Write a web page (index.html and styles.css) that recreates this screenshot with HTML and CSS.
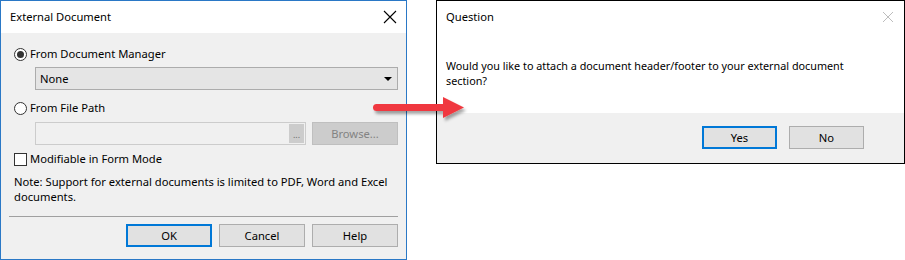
FILE: index.html
```html
<!DOCTYPE html>
<html>
  <head>
    <title>External Document</title>
    <link rel="stylesheet" href="styles.css">
  </head>

  <body>
    <div class="stage">
      <div class="dialog ext">
        <div class="titlebar">
          <span class="title">External Document</span>
          <svg class="close" width="14" height="14" viewBox="0 0 14 14">
            <path d="M1 1 L13 13 M13 1 L1 13" stroke="#000" stroke-width="1.1" fill="none" />
          </svg>
        </div>

        <div class="body">
          <label class="option first">
            <span class="radio checked"></span>
            From Document Manager
          </label>
          <div class="combo">
            <span>None</span>
            <span class="caret"></span>
          </div>

          <label class="option second">
            <span class="radio"></span>
            From File Path
          </label>
          <div class="pathrow">
            <div class="pathbox">
              <span class="dots">...</span>
            </div>
            <button class="btn disabled" disabled>Browse...</button>
          </div>

          <label class="option third">
            <span class="check"></span>
            Modifiable in Form Mode
          </label>

          <p class="note">
            Note: Support for external documents is limited to PDF, Word and Excel
            documents.
          </p>

          <hr class="sep" />

          <div class="actions">
            <button class="btn default">OK</button>
            <button class="btn">Cancel</button>
            <button class="btn">Help</button>
          </div>
        </div>
      </div>

      <div class="dialog question">
        <div class="qtop">
          <div class="qtitle">
            <span class="title">Question</span>
            <svg class="close faint" width="12" height="12" viewBox="0 0 12 12">
              <path d="M1 1 L11 11 M11 1 L1 11" stroke="#bdbdbd" stroke-width="1" fill="none" />
            </svg>
          </div>
          <p class="message">
            Would you like to attach a document header/footer to your external document
            section?
          </p>
        </div>
        <div class="qfoot">
          <button class="btn default small">Yes</button>
          <button class="btn small">No</button>
        </div>
      </div>

      <!-- red arrow drawn over both dialogs -->
      <svg class="arrow" width="100" height="34" viewBox="0 0 100 34">
        <defs>
          <filter id="shadow" x="-10%" y="-30%" width="130%" height="180%">
            <feDropShadow dx="2" dy="3" stdDeviation="1.6" flood-color="#000" flood-opacity="0.35" />
          </filter>
        </defs>
        <g filter="url(#shadow)">
          <rect x="3" y="10" width="74" height="7" rx="3.5" fill="#f0393f" />
          <path d="M73 3 L94 13.5 L73 24 Z" fill="#f0393f" />
        </g>
      </svg>
    </div>
  </body>
</html>
```

FILE: styles.css
```css
body {
  margin: 0;
  background-color: #fff;
  font-family: "Noto Sans", "Open Sans", sans-serif;
  font-size: 11.2px;
  color: #000;
}

.stage {
  position: relative;
  display: flex;
  align-items: flex-start;
  width: 905px;
  height: 260px;
}

.dialog {
  box-sizing: border-box;
  display: flex;
  flex-direction: column;
}

.ext {
  width: 407px;
  height: 260px;
  border: 1px solid #2a78c6;
  background-color: #f0f0f0;
}

.titlebar {
  height: 32px;
  background-color: #fff;
  display: flex;
  align-items: center;
  justify-content: space-between;
  padding: 0 9px 0 9px;
}

.title {
  line-height: 16px;
}

.close {
  display: block;
}

.body {
  flex: 1;
  display: flex;
  flex-direction: column;
  padding: 0 8px 0 13px;
}

.option {
  display: flex;
  align-items: center;
  gap: 3px;
  height: 16px;
  line-height: 16px;
}

.option.first {
  margin-top: 13px;
}

.option.second {
  margin-top: 10px;
}

.option.third {
  margin-top: 6px;
}

.radio {
  box-sizing: border-box;
  width: 13px;
  height: 13px;
  border: 1px solid #333;
  border-radius: 50%;
  background-color: #fff;
  display: flex;
  align-items: center;
  justify-content: center;
}

.radio.checked::after {
  content: "";
  width: 7px;
  height: 7px;
  border-radius: 50%;
  background-color: #333;
}

.check {
  box-sizing: border-box;
  width: 13px;
  height: 13px;
  border: 1px solid #333;
  background-color: #fff;
}

.combo {
  box-sizing: border-box;
  margin: 5px 0 0 21px;
  height: 23px;
  background-color: #e5e5e5;
  border: 1px solid #acacac;
  display: flex;
  align-items: center;
  justify-content: space-between;
  padding: 0 5px 0 4px;
}

.caret {
  width: 0;
  height: 0;
  border-left: 4px solid transparent;
  border-right: 4px solid transparent;
  border-top: 4px solid #000;
}

.pathrow {
  display: flex;
  gap: 6px;
  margin: 6px 0 0 21px;
}

.pathbox {
  box-sizing: border-box;
  width: 271px;
  height: 23px;
  border: 1px solid #cccccc;
  background-color: #f0f0f0;
  display: flex;
  justify-content: flex-end;
  padding: 1px;
}

.dots {
  width: 15px;
  background-color: #cccccc;
  color: #6d6d6d;
  font-size: 9px;
  text-align: center;
  line-height: 22px;
}

.btn {
  box-sizing: border-box;
  width: 86px;
  height: 23px;
  font-family: inherit;
  font-size: 11.2px;
  color: #000;
  background-color: #e1e1e1;
  border: 1px solid #adadad;
  padding: 0;
}

.btn.disabled {
  background-color: #cccccc;
  border-color: #bfbfbf;
  color: #838383;
}

.btn.default {
  border: 2px solid #0078d7;
}

.note {
  margin: 7px 0 0 0;
  line-height: 15px;
}

.sep {
  margin: 12px 0 0 -5px;
  border: none;
  border-top: 1px solid #a0a0a0;
  height: 0;
}

.actions {
  display: flex;
  justify-content: flex-end;
  gap: 7px;
  margin-top: 7px;
}

.question {
  width: 469px;
  height: 164px;
  margin-left: 29px;
  border: 1px solid #000;
  background-color: #fff;
}

.qtop {
  height: 112px;
  padding: 0 10px 0 9px;
}

.qtitle {
  height: 32px;
  display: flex;
  align-items: center;
  justify-content: space-between;
}

.message {
  max-width: 405px;
  margin: 25px 0 0 0;
  line-height: 15px;
  font-size: 10.8px;
}

.qfoot {
  flex: 1;
  background-color: #f0f0f0;
  display: flex;
  justify-content: flex-end;
  align-items: flex-start;
  gap: 12px;
  padding: 13px 40px 0 0;
}

.btn.small {
  width: 75px;
}

.arrow {
  position: absolute;
  left: 370px;
  top: 94px;
}
```
